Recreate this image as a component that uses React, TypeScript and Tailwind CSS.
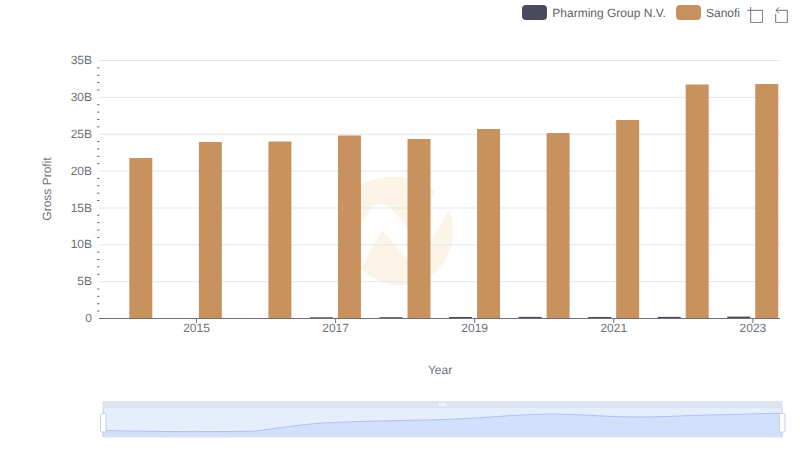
const sanofiTops = [158, 142, 141.5, 135.5, 139, 129, 133, 120, 84.5, 84];
const pharmingTops = [318, 318, 318, 317.3, 317.2, 317, 316.9, 317, 316.9, 316.6];
const gridRows = [
  { label: "35B", y: 60.5 },
  { label: "30B", y: 97.4 },
  { label: "25B", y: 134.3 },
  { label: "20B", y: 171.1 },
  { label: "15B", y: 208 },
  { label: "10B", y: 244.8 },
  { label: "5B", y: 281.7 },
];
const minorTicks = Array.from({ length: 35 }, (_, i) => 60.5 + i * 7.37).filter((_, i) => i % 5 !== 0);
const years = [
  { label: "2015", x: 196.5 },
  { label: "2017", x: 335.6 },
  { label: "2019", x: 474.7 },
  { label: "2021", x: 613.8 },
  { label: "2023", x: 752.9 },
];
const sliderLine =
  "M103 430.5C130 431 155 431.6 180 431.6C205 431.6 230 431.6 253 431.3C280 428 300 424.6 323 423C360 421 410 420.6 450 419.3C490 417.6 525 414 553 414C585 414.4 610 417.2 640 417C665 416.8 685 415.8 707 415C735 414.6 760 413.6 782 413.3";

function Chart() {
  return (
    <svg viewBox="0 0 800 461" className="absolute inset-0 h-[461px] w-[800px]">
      {/* watermark */}
      <path
        d="M435 191A68 68 0 0 0 361 185L345 248L372 207Q380 201 390 207L415 236Z"
        className="fill-[#fdf4e8]"
      />
      <path
        d="M382 230L361 268A53 53 0 0 0 453 230A53 53 0 0 0 449 210L428 247L406 258Z"
        className="fill-[#fdf4e8]"
      />

      {gridRows.map((row) => (
        <line key={row.label} x1="99" x2="780" y1={row.y} y2={row.y} className="stroke-[#e0e6f1]" />
      ))}
      {minorTicks.map((y) => (
        <line key={y} x1="97" x2="99.5" y1={y} y2={y} className="stroke-[#6e7079]" />
      ))}

      {sanofiTops.map((top, i) => (
        <g key={i}>
          <rect
            x={101.3 + i * 69.55}
            y={pharmingTops[i]}
            width="23"
            height={318 - pharmingTops[i]}
            className="fill-[#4a4a5c]"
          />
          <rect x={129.3 + i * 69.55} y={top} width="23" height={318 - top} className="fill-[#c8925e]" />
        </g>
      ))}

      <line x1="99" x2="780" y1="318.5" y2="318.5" className="stroke-[#6e7079]" />
      {years.map((year) => (
        <g key={year.label}>
          <line x1={year.x} x2={year.x} y1="319" y2="323" className="stroke-[#6e7079]" />
          <text x={year.x} y="332" textAnchor="middle" className="fill-[#6e7079] text-xs">
            {year.label}
          </text>
        </g>
      ))}
      {gridRows.map((row) => (
        <text key={row.label} x="92" y={row.y + 3.5} textAnchor="end" className="fill-[#6e7079] text-xs">
          {row.label}
        </text>
      ))}
      <text x="92" y="322" textAnchor="end" className="fill-[#6e7079] text-xs">
        0
      </text>
      <text x="440" y="374" textAnchor="middle" className="fill-[#6e7079] text-xs">
        Year
      </text>
      <text
        x="50.5"
        y="189"
        textAnchor="middle"
        transform="rotate(-90 50.5 189)"
        className="fill-[#6e7079] text-xs"
      >
        Gross Profit
      </text>

      {/* range slider */}
      <rect x="102.5" y="401" width="680" height="7" className="fill-[#dde3f0]" />
      <rect x="102.5" y="408" width="680" height="29.5" className="fill-[#e6edfd]" />
      <path d={`${sliderLine}V437H103Z`} className="fill-[#d2e0fb]" />
      <path d={sliderLine} fill="none" className="stroke-[#aac4f3]" />
      <rect x="102.5" y="436.5" width="680" height="1" className="fill-[#dfe5f3]" />
      <line x1="103" x2="103" y1="408" y2="437" className="stroke-[#c6cfe3]" />
      <line x1="782" x2="782" y1="408" y2="437" className="stroke-[#c6cfe3]" />
      <rect x="100.5" y="413.5" width="5.5" height="18.5" rx="1" className="fill-white stroke-[#c6cfe3]" />
      <rect x="779.5" y="413.5" width="5.5" height="18.5" rx="1" className="fill-white stroke-[#c6cfe3]" />
      <rect x="439.4" y="403" width="1.2" height="3" className="fill-white" />
      <rect x="441.9" y="403" width="1.2" height="3" className="fill-white" />
      <rect x="444.4" y="403" width="1.2" height="3" className="fill-white" />
    </svg>
  );
}

function Legend() {
  return (
    <div className="relative flex h-[25px] items-center justify-end pr-[12px] text-xs text-[#5f5f68]">
      <span className="h-[15px] w-[25px] rounded-[4px] bg-[#4a4a5c]" />
      <span className="ml-[5px]">Pharming Group N.V.</span>
      <span className="ml-[10px] h-[15px] w-[25px] rounded-[4px] bg-[#c8925e]" />
      <span className="ml-[5px]">Sanofi</span>
      <svg viewBox="0 0 16 16" className="ml-[7px] mt-[5px] h-4 w-4 fill-none stroke-[#6e7079]">
        <path d="M0.5 3.3H15.7M3.7 0V15.7H15.7V3.3" />
      </svg>
      <svg viewBox="0 0 13 16" className="ml-[12px] mt-[5px] h-4 w-[13px] fill-none stroke-[#6e7079]">
        <path d="M0.7 7V15.7H12.3V3.3H1M1 3.3L4.5 0M1 3.3L4 6.3" />
      </svg>
    </div>
  );
}

export default function App() {
  return (
    <div className="relative h-[461px] w-[800px] overflow-hidden bg-white font-['Liberation_Sans',Arial,sans-serif] [text-rendering:geometricPrecision]">
      <Chart />
      <Legend />
    </div>
  );
}
